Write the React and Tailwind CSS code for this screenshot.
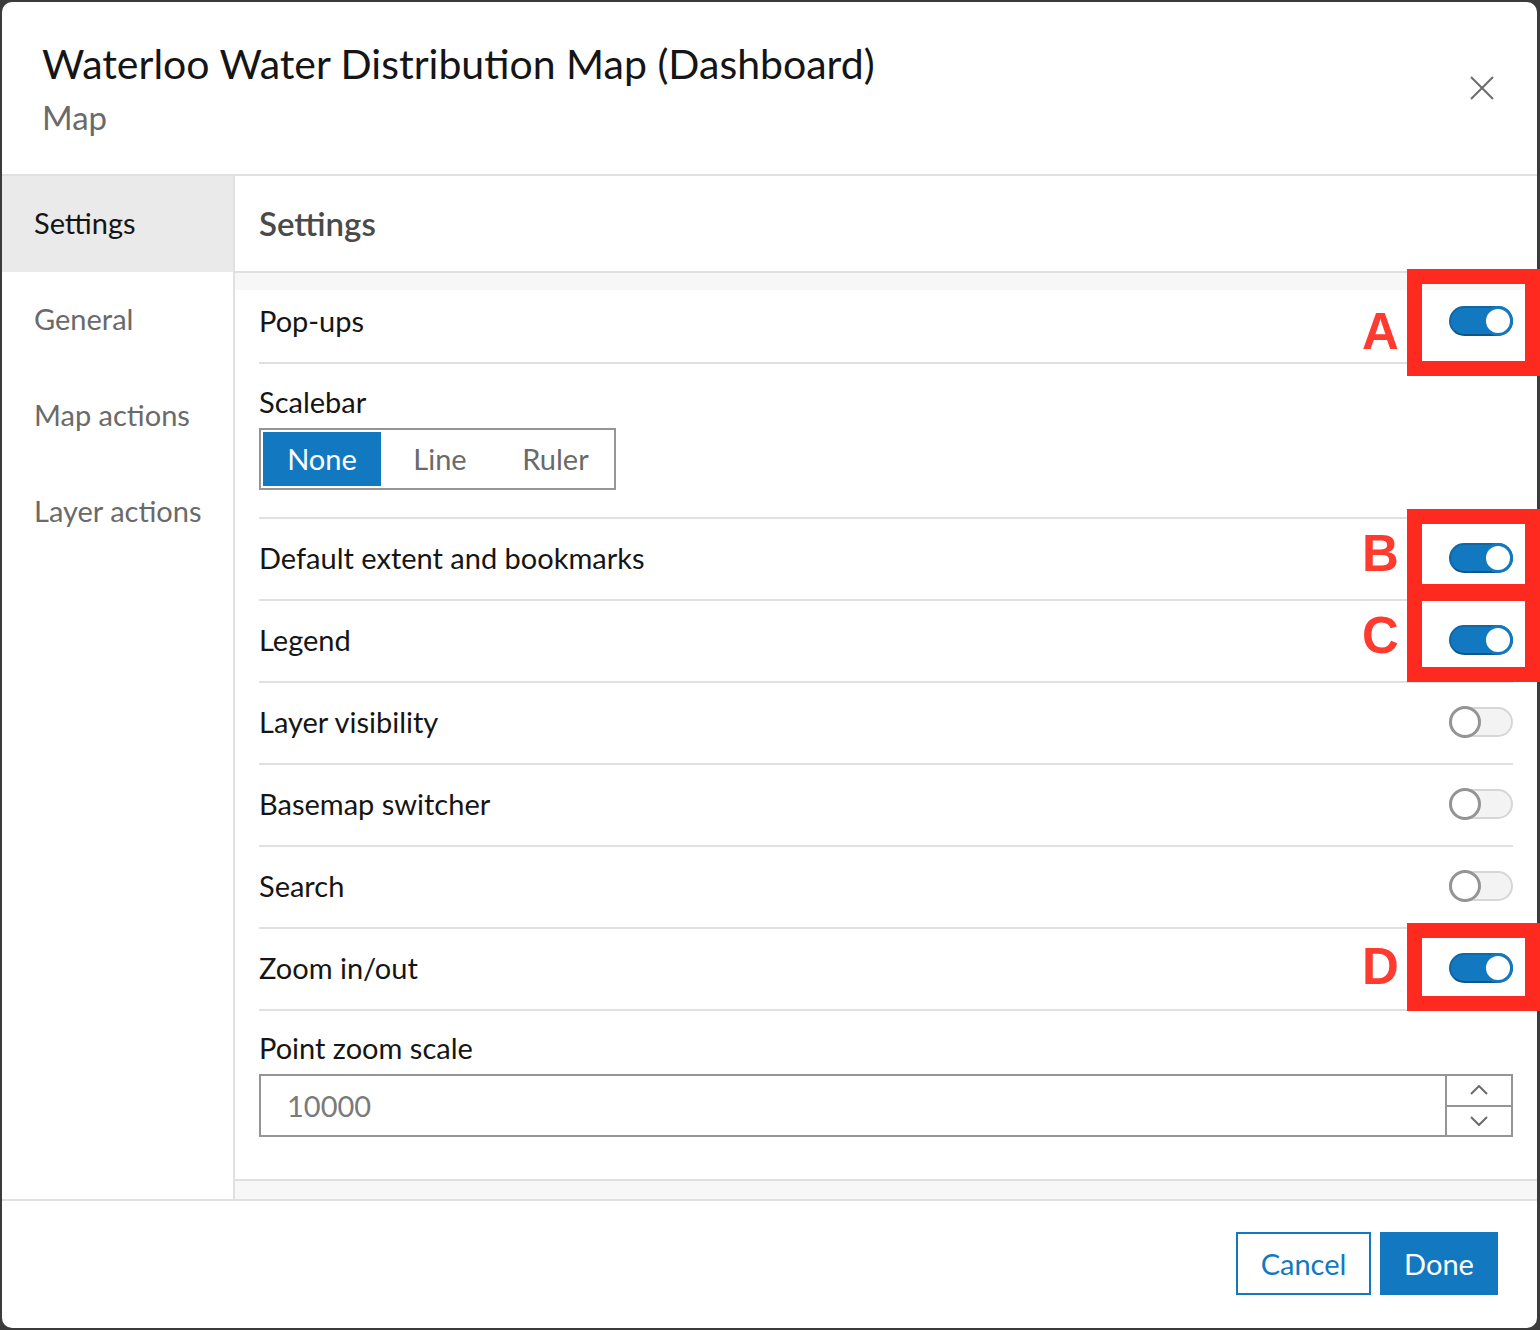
const font = { fontFamily: 'Lato, "Open Sans", sans-serif' };

const Toggle = ({ on }) => {
  if (on) {
    return (
      <div className="relative w-[64px] h-[30px] rounded-full bg-[#1279c1] border-2 border-[#0f67a6] border-b-[#0b5689]">
        <div className="absolute right-[-2px] top-[-2px] w-[30px] h-[30px] rounded-full bg-white border-[3px] border-[#1279c1]" />
      </div>
    );
  }
  return (
    <div className="relative w-[64px] h-[30px] rounded-full bg-[#f3f3f3] border-2 border-[#d6d6d6]">
      <div className="absolute left-[-2px] top-[-3px] w-[32px] h-[32px] rounded-full bg-white border-[3px] border-[#949494]" />
    </div>
  );
};

const Row = ({ label, on }) => (
  <div className="h-[82px] flex items-center justify-between pb-[2px] border-b-2 border-[#e0e0e0]">
    <span className="text-[29px] text-[#151515]">{label}</span>
    <Toggle on={on} />
  </div>
);

const Chevron = ({ up }) => (
  <svg width="18" height="10" viewBox="0 0 18 10" className="text-[#6b6b6b]">
    <path
      d={up ? 'M1 9L9 1L17 9' : 'M1 1L9 9L17 1'}
      stroke="currentColor"
      strokeWidth="2"
      fill="none"
    />
  </svg>
);

// red callout boxes drawn over the screenshot
const Mark = ({ letter, top, letterTop, height }) => (
  <>
    <div
      className="absolute left-[1407px] w-[133px] border-[15px] border-[#ff2a1f]"
      style={{ top, height }}
    />
    <div
      className="absolute left-[1362px] text-[51px] font-black text-[#ff3b30] leading-none"
      style={{ top: letterTop, fontFamily: '"Liberation Sans", Arial, sans-serif' }}
    >
      {letter}
    </div>
  </>
);

export default function App() {
  const nav = ['Settings', 'General', 'Map actions', 'Layer actions'];

  return (
    <div className="relative min-h-screen bg-[#3b3b3b] p-[2px] pr-[3px]" style={font}>
      <div className="w-[1535px] h-[1326px] bg-white rounded-[10px] flex flex-col overflow-hidden">
        {/* header */}
        <div className="h-[174px] shrink-0 flex items-center justify-between pl-[40px] pr-[43px] border-b-2 border-[#e0e0e0]">
          <div className="flex flex-col pt-[2px]">
            <h1 className="text-[41px] leading-[48px] text-[#151515]">Waterloo Water Distribution Map (Dashboard)</h1>
            <p className="mt-[7px] text-[33px] leading-[44px] text-[#6a6a6a]">Map</p>
          </div>
          <svg width="24" height="24" viewBox="0 0 24 24" className="text-[#6b6b6b]">
            <path d="M1 1L23 23M23 1L1 23" stroke="currentColor" strokeWidth="2" fill="none" />
          </svg>
        </div>

        {/* body */}
        <div className="flex flex-1 min-h-0">
          <aside className="w-[233px] shrink-0 border-r-2 border-[#e0e0e0]">
            {nav.map((item, i) => (
              <div
                key={item}
                className={
                  i === 0
                    ? 'h-[96px] flex items-center pl-[32px] pb-[2px] bg-[#eaeaea] text-[29px] text-[#151515]'
                    : 'h-[96px] flex items-center pl-[32px] pb-[2px] text-[29px] text-[#6a6a6a]'
                }
              >
                {item}
              </div>
            ))}
          </aside>

          <main className="flex-1 flex flex-col">
            <div className="h-[97px] shrink-0 flex items-center pl-[24px] border-b-2 border-[#e0e0e0]">
              <h2 className="text-[33px] font-semibold text-[#4a4a4a]">Settings</h2>
            </div>
            <div className="h-[17px] shrink-0 bg-[#f7f7f7]" />

            <div className="flex-1 px-[24px]">
              <div className="h-[74px] flex items-center justify-between pb-[10px] border-b-2 border-[#e0e0e0]">
                <span className="text-[29px] text-[#151515]">Pop-ups</span>
                <Toggle on />
              </div>

              <div className="h-[155px] pt-[20px] border-b-2 border-[#e0e0e0]">
                <div className="text-[29px] leading-[36px] text-[#151515]">Scalebar</div>
                <div className="mt-[8px] inline-flex p-[2px] border-2 border-[#959595] h-[62px]">
                  <div className="w-[118px] flex items-center justify-center bg-[#1279c1] text-white text-[29px]">None</div>
                  <div className="w-[118px] flex items-center justify-center text-[#6a6a6a] text-[29px]">Line</div>
                  <div className="w-[113px] flex items-center justify-center text-[#6a6a6a] text-[29px]">Ruler</div>
                </div>
              </div>

              <Row label="Default extent and bookmarks" on />
              <Row label="Legend" on />
              <Row label="Layer visibility" />
              <Row label="Basemap switcher" />
              <Row label="Search" />
              <Row label="Zoom in/out" on />

              <div className="pt-[19px]">
                <div className="text-[29px] leading-[36px] text-[#151515]">Point zoom scale</div>
                <div className="mt-[8px] h-[63px] flex border-2 border-[#959595]">
                  <div className="flex-1 flex items-center pl-[26px] text-[29px] text-[#7a7a7a]">10000</div>
                  <div className="w-[66px] flex flex-col border-l-2 border-[#959595]">
                    <div className="flex-1 flex items-center justify-center border-b-2 border-[#959595]">
                      <Chevron up />
                    </div>
                    <div className="flex-1 flex items-center justify-center">
                      <Chevron />
                    </div>
                  </div>
                </div>
              </div>
            </div>

            <div className="h-[20px] shrink-0 bg-[#f7f7f7] border-t-2 border-[#e0e0e0]" />
          </main>
        </div>

        {/* footer */}
        <div className="h-[129px] shrink-0 flex items-center justify-end gap-[9px] pr-[39px] pb-[2px] border-t-2 border-[#e0e0e0]">
          <button className="w-[135px] h-[63px] border-2 border-[#1279c1] text-[#1279c1] text-[29px]">Cancel</button>
          <button className="w-[118px] h-[63px] bg-[#1279c1] text-white text-[29px]">Done</button>
        </div>
      </div>

      <Mark letter="A" top={269} height={107} letterTop={306} />
      <Mark letter="B" top={509} height={90} letterTop={528} />
      <Mark letter="C" top={586} height={96} letterTop={610} />
      <Mark letter="D" top={923} height={88} letterTop={941} />
    </div>
  );
}
